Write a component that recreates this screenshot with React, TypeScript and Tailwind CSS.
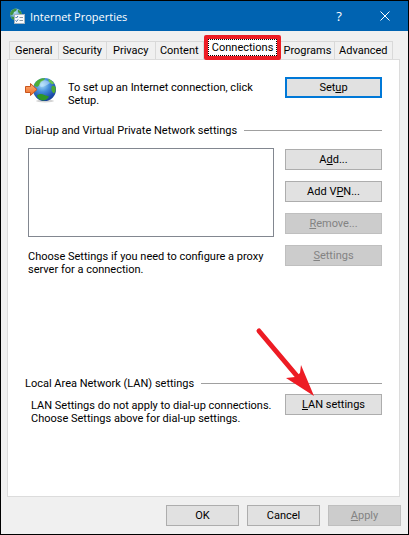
import type { ReactNode } from 'react'

const tabs = ['General', 'Security', 'Privacy', 'Content', 'Connections', 'Programs', 'Advanced']

type ButtonProps = {
  children: ReactNode
  wide?: boolean
  primary?: boolean
  disabled?: boolean
}

const DialogButton = ({ children, wide, primary, disabled }: ButtonProps) => (
  <button
    type="button"
    disabled={disabled}
    className={`h-[21px] shrink-0 text-center leading-[13px] ${wide ? 'w-[97px]' : 'w-[73px]'} ${
      disabled
        ? 'border border-[#bfbfbf] bg-[#cccccc] text-[#838383]'
        : primary
          ? 'border-2 border-[#0078d7] bg-[#e1e1e1]'
          : 'border border-[#adadad] bg-[#e1e1e1]'
    }`}
  >
    {children}
  </button>
)

const GroupHeading = ({ children }: { children: ReactNode }) => (
  <h2 className="flex items-center gap-[7px] whitespace-nowrap">
    {children}
    <span className="h-px flex-1 bg-[#a0a0a0]" />
  </h2>
)

const TitleIcon = () => (
  <svg viewBox="0 0 16 16" className="h-4 w-4" aria-hidden="true">
    <defs>
      <radialGradient id="smallGlobe" cx="0.4" cy="0.3" r="0.7">
        <stop offset="0" stopColor="#b9e0f2" />
        <stop offset="1" stopColor="#3482b8" />
      </radialGradient>
    </defs>
    <circle cx="7" cy="6.5" r="6" fill="url(#smallGlobe)" />
    <path d="M1 5 3 2l3-1.500 2 .5-1 2-2 1-1 2.500-2.500 1zM9 1.500l3 2 1 3-2-.5L9 4zM2 8.500l3 .5v3l-2-1z" fill="#3f9440" />
    <rect x="5.500" y="6.500" width="10" height="9" fill="#f8fafb" stroke="#a4b4bf" />
    <path d="m6.500 9 1 1 1.500-2M6.500 12.500l1 1 1.500-2" fill="none" stroke="#386ea8" />
    <path d="M10.500 9.500h3.500M10.500 12.500h3.500" stroke="#8a98a3" />
  </svg>
)

const ConnectIcon = () => (
  <svg viewBox="0 0 32 26" className="h-[26px] w-8 shrink-0" aria-hidden="true">
    <defs>
      <radialGradient id="globe" cx="0.4" cy="0.3" r="0.75">
        <stop offset="0" stopColor="#a9dcf8" />
        <stop offset="0.4" stopColor="#458fdb" />
        <stop offset="0.8" stopColor="#1d4fae" />
        <stop offset="1" stopColor="#173f94" />
      </radialGradient>
      <linearGradient id="arrow" x1="0" y1="0" x2="0" y2="1">
        <stop offset="0" stopColor="#ffae78" />
        <stop offset="1" stopColor="#ec6c25" />
      </linearGradient>
    </defs>
    <ellipse cx="20" cy="24" rx="9" ry="1.500" fill="#d4d4d4" />
    <circle cx="19.500" cy="12.500" r="11.500" fill="url(#globe)" />
    <path d="M9 8C11 3.500 15 1 20 1.300c0 1.500-2 2.500-3 3.200-2 1-2 3.500-4 5-1.500.5-3 0-4-1.500z" fill="#4fae37" />
    <path d="M23 2c3 .8 5 2.500 6 5l-2 .3-3-2.300z" fill="#69c449" />
    <path d="M27 9c2-1 3.500.5 3.800 2.500-.1 2-.8 4-1.800 5-2-1-3.500-4.500-2-7.500z" fill="#4aaa33" />
    <path d="M12 18.500c2-2 5-2 7.500-.5 1.500.8 3.500 1 4.500 1.500-1 2-3 4-6.500 4-3-.8-5.500-2.500-5.500-5z" fill="#2f9627" />
    <path d="M16 4c3-1.500 7-1 9 2-3 2-6 4-9 4-2-1-2-4 0-6z" fill="#d4f0ff" opacity="0.45" />
    <path d="M.5 9.500h5v-3l6.500 6-6.500 6v-3h-5z" fill="url(#arrow)" stroke="#c9551c" />
  </svg>
)

const App = () => {
  return (
    <main className="flex min-h-screen flex-col border border-black bg-[#f0f0f0] font-['Roboto',sans-serif] text-[11px] leading-[13px] text-black">
      {/* Title bar */}
      <header className="flex h-[30px] items-center bg-[#0063b1] pl-2 text-white">
        <TitleIcon />
        <h1 className="ml-[5px] flex-1 font-['Open_Sans',sans-serif] text-[11px]">Internet Properties</h1>
        <button type="button" aria-label="Help" className="w-[46px] text-center font-['Open_Sans',sans-serif] text-[13px]">
          ?
        </button>
        <button type="button" aria-label="Close" className="flex w-[46px] justify-center">
          <svg viewBox="0 0 10 10" className="h-[10px] w-[10px]" aria-hidden="true">
            <path d="m.5.5 9 9m0-9-9 9" stroke="white" fill="none" />
          </svg>
        </button>
      </header>

      <div className="flex flex-1 flex-col pt-2 pr-[7px] pl-[6px]">
        {/* Tabs */}
        <div role="tablist" className="flex h-5 items-end pr-2 pl-[2px]">
          {tabs.map((tab) =>
            tab === 'Connections' ? (
              <div key={tab} className="relative h-5 flex-[78]">
                <button
                  type="button"
                  role="tab"
                  aria-selected="true"
                  className="absolute inset-x-0 -top-1 h-[25px] rounded-[2px] border-4 border-[#ed1c24] bg-white"
                >
                  <span className="block border border-dotted border-black leading-[15px]">{tab}</span>
                </button>
              </div>
            ) : (
              <button
                key={tab}
                type="button"
                role="tab"
                aria-selected="false"
                className={`h-[18px] border-t border-r border-[#d9d9d9] first:border-l ${
                  tab === 'Advanced' ? 'flex-[58]' : tab === 'Programs' ? 'flex-[53]' : 'flex-[48]'
                }`}
              >
                {tab}
              </button>
            ),
          )}
        </div>

        {/* Connections page */}
        <section className="mr-px flex-1 border border-[#dcdcdc] bg-white px-[17px] pt-[17px]">
          <div className="flex items-start">
            <ConnectIcon />
            <p className="ml-[11px] flex-1 pt-1">
              To set up an Internet connection, click
              <br />
              Setup.
            </p>
            <DialogButton wide primary>
              Set<u>u</u>p
            </DialogButton>
          </div>

          <div className="mt-[17px]">
            <GroupHeading>Dial-up and Virtual Private Network settings</GroupHeading>
          </div>
          <div className="mt-[11px] flex gap-[11px] pl-[3px]">
            <div className="flex-1">
              <select
                size={5}
                aria-label="Dial-up and Virtual Private Network settings"
                className="block h-[89px] w-full appearance-none border border-[#828790] bg-white"
              />
              <p className="mt-[13px]">
                Choose Settings if you need to configure a proxy
                <br />
                server for a connection.
              </p>
            </div>
            <div className="flex flex-col gap-[11px] pt-px">
              <DialogButton wide>
                A<u>d</u>d...
              </DialogButton>
              <DialogButton wide>
                Add V<u>P</u>N...
              </DialogButton>
              <DialogButton wide disabled>
                <u>R</u>emove...
              </DialogButton>
              <DialogButton wide disabled>
                <u>S</u>ettings
              </DialogButton>
            </div>
          </div>

          <div className="mt-[101px]">
            <GroupHeading>Local Area Network (LAN) settings</GroupHeading>
          </div>
          <div className="mt-1 flex items-start justify-between pl-[6px]">
            <p className="pt-[5px]">
              LAN Settings do not apply to dial-up connections.
              <br />
              Choose Settings above for dial-up settings.
            </p>
            <div className="relative">
              <DialogButton wide>
                <u>L</u>AN settings
              </DialogButton>
              {/* Pointer to the LAN button */}
              <svg
                viewBox="0 0 60 70"
                className="pointer-events-none absolute right-[67px] bottom-[18px] h-[70px] w-[60px]"
                aria-hidden="true"
              >
                <path d="M4 4 42 49" stroke="#ed1c24" strokeWidth="5" strokeLinecap="round" />
                <path d="M59 69 31 51l9-1 5-4 1-8z" fill="#ed1c24" />
              </svg>
            </div>
          </div>
        </section>

        {/* Footer */}
        <footer className="flex justify-end gap-2 py-2">
          <DialogButton>OK</DialogButton>
          <DialogButton>Cancel</DialogButton>
          <DialogButton disabled>
            <u>A</u>pply
          </DialogButton>
        </footer>
      </div>
    </main>
  )
}

export default App
